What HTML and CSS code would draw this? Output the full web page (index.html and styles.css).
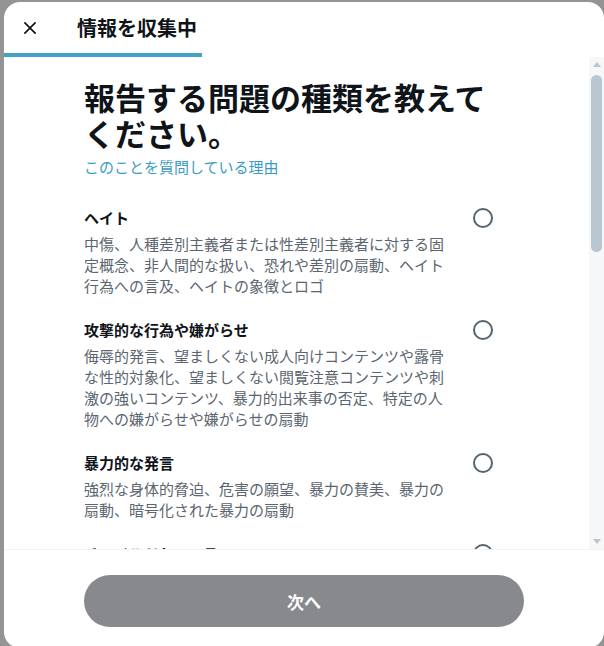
FILE: index.html
```html
<!DOCTYPE html>
<html lang="ja">
<head>
	<meta charset="UTF-8">
	<title>報告</title>
	<link rel="stylesheet" href="styles.css">
</head>
<body>
	<div class="dialog">
		<div class="header">
			<a href="javascript:;" class="close">
				<svg viewBox="0 0 24 24"><path d="M10.59 12L4.54 5.96l1.42-1.42L12 10.59l6.04-6.05 1.42 1.42L13.41 12l6.05 6.04-1.42 1.42L12 13.41l-6.04 6.05-1.42-1.42L10.59 12z"></path></svg>
			</a>
			<h2 class="title">情報を収集中</h2>
		</div>
		<div class="progress"><div class="progress-bar"></div></div>
		<div class="main">
			<div class="scroll">
				<h1 class="heading">報告する問題の種類を教えてください。</h1>
				<a href="javascript:;" class="why">このことを質問している理由</a>
				<ul class="options">
					<li class="option">
						<div class="option-text">
							<div class="option-title">ヘイト</div>
							<div class="option-desc">中傷、人種差別主義者または性差別主義者に対する固定概念、非人間的な扱い、恐れや差別の扇動、ヘイト行為への言及、ヘイトの象徴とロゴ</div>
						</div>
						<span class="radio"></span>
					</li>
					<li class="option">
						<div class="option-text">
							<div class="option-title">攻撃的な行為や嫌がらせ</div>
							<div class="option-desc">侮辱的発言、望ましくない成人向けコンテンツや露骨な性的対象化、望ましくない閲覧注意コンテンツや刺激の強いコンテンツ、暴力的出来事の否定、特定の人物への嫌がらせや嫌がらせの扇動</div>
						</div>
						<span class="radio"></span>
					</li>
					<li class="option">
						<div class="option-text">
							<div class="option-title">暴力的な発言</div>
							<div class="option-desc">強烈な身体的脅迫、危害の願望、暴力の賛美、暴力の扇動、暗号化された暴力の扇動</div>
						</div>
						<span class="radio"></span>
					</li>
					<li class="option">
						<div class="option-text">
							<div class="option-title">チャイルドセーフティ</div>
							<div class="option-desc">児童の性的搾取、グルーミング、児童への身体的虐待、未成年者によるアルコールや規制薬物の使用</div>
						</div>
						<span class="radio"></span>
					</li>
					<li class="option">
						<div class="option-text">
							<div class="option-title">プライバシー</div>
							<div class="option-desc">個人情報の共有、個人情報を公開するという脅しや動機付け、同意のないプライベートな画像の共有</div>
						</div>
						<span class="radio"></span>
					</li>
					<li class="option">
						<div class="option-text">
							<div class="option-title">スパム</div>
							<div class="option-desc">詐欺、フィッシング、不審なリンク、偽のエンゲージメント、繰り返しの返信、リポスト、ダイレクトメッセージ</div>
						</div>
						<span class="radio"></span>
					</li>
				</ul>
			</div>
			<div class="scrollbar">
				<div class="scroll-btn"><span class="arrow-up"></span></div>
				<div class="scroll-track"><div class="scroll-thumb"></div></div>
				<div class="scroll-btn"><span class="arrow-down"></span></div>
			</div>
		</div>
		<div class="footer">
			<button class="next" disabled>次へ</button>
		</div>
	</div>
</body>
</html>
```

FILE: styles.css
```css
body {
	margin: 0;
	padding: 2px 0 0 4px;
	background: #939496;
	overflow: hidden;
	font-family: "Noto Sans CJK JP", "Noto Sans", sans-serif;
	color: #0f1419;
}
.dialog {
	width: 600px;
	height: 646px;
	background: #fff;
	border-radius: 16px;
	display: flex;
	flex-direction: column;
	overflow: hidden;
}
.header {
	height: 51px;
	display: flex;
	align-items: center;
	padding-left: 8px;
	flex-shrink: 0;
}
.close {
	width: 36px;
	height: 36px;
	display: flex;
	align-items: center;
	justify-content: center;
}
.close svg {
	width: 20px;
	height: 20px;
	fill: #0f1419;
}
.title {
	margin: 0 0 0 29px;
	font-size: 20px;
	line-height: 24px;
	font-weight: 700;
}
.progress {
	height: 4px;
	flex-shrink: 0;
}
.progress-bar {
	width: 33%;
	height: 100%;
	background: #45a1c7;
}

.main {
	flex: 1;
	min-height: 0;
	display: flex;
}
.scroll {
	flex: 1;
	overflow: hidden;
	padding: 22px 80px 0;
}
.scrollbar {
	width: 15px;
	flex-shrink: 0;
	background: #f5f7f8;
	display: flex;
	flex-direction: column;
}
.scroll-btn {
	height: 15px;
	display: flex;
	align-items: center;
	justify-content: center;
}
.arrow-up {
	border-left: 4.5px solid transparent;
	border-right: 4.5px solid transparent;
	border-bottom: 5px solid #b8c6d1;
}
.arrow-down {
	border-left: 4.5px solid transparent;
	border-right: 4.5px solid transparent;
	border-top: 5px solid #b8c6d1;
}
.scroll-track {
	flex: 1;
	padding: 3px 2px 0;
}
.scroll-thumb {
	height: 177px;
	background: #b8c6d1;
	border-radius: 6px;
}

.heading {
	margin: 0;
	font-size: 31px;
	line-height: 36px;
	font-weight: 700;
}
.why {
	display: block;
	margin-top: 6px;
	font-size: 15px;
	line-height: 20px;
	color: #3b9cc3;
	text-decoration: none;
}
.options {
	list-style: none;
	margin: 19px 0 0;
	padding: 0;
}
.option {
	display: flex;
	padding: 12px 0;
}
.option-text {
	flex: 1;
}
.option-title {
	font-size: 15px;
	line-height: 20px;
	font-weight: 700;
}
.option-desc {
	margin-top: 5px;
	font-size: 15px;
	line-height: 21px;
	color: #5b6670;
}
.radio {
	width: 20px;
	height: 20px;
	box-sizing: border-box;
	border: 2px solid #536471;
	border-radius: 50%;
	flex-shrink: 0;
	margin: 0 16px 0 24px;
}

.footer {
	flex-shrink: 0;
	border-top: 1px solid #eff3f4;
	padding: 25px 80px 21px;
}
.next {
	display: block;
	width: 100%;
	height: 52px;
	border: none;
	border-radius: 9999px;
	background: #87898c;
	color: #fff;
	font-family: inherit;
	font-size: 17px;
	font-weight: 700;
}
```
